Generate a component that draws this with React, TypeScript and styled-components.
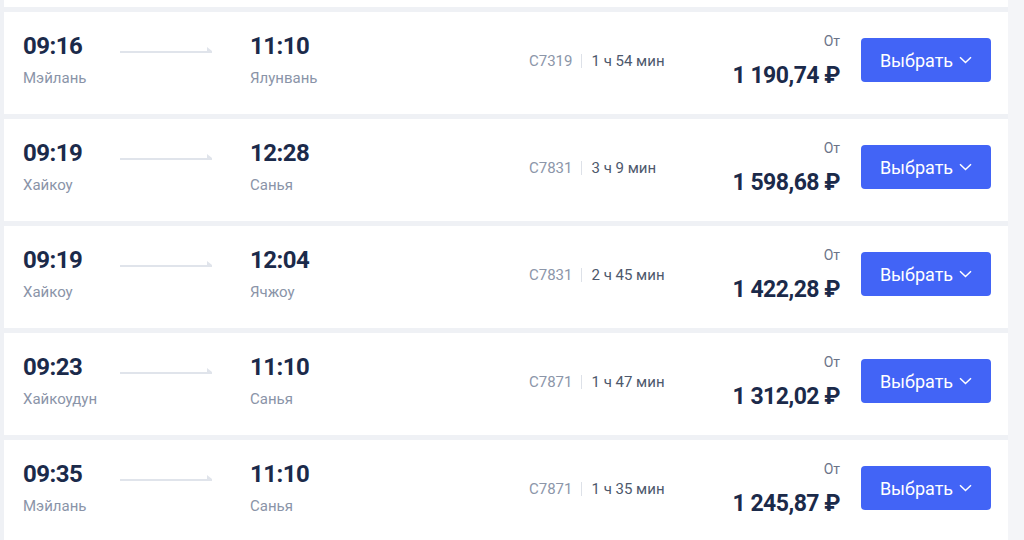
import React from "react";
import styled, { createGlobalStyle } from "styled-components";

interface Trip {
  depTime: string;
  depCity: string;
  arrTime: string;
  arrCity: string;
  code: string;
  duration: string;
  price: string;
}

const trips: Trip[] = [
  { depTime: "09:16", depCity: "Мэйлань", arrTime: "11:10", arrCity: "Ялунвань", code: "C7319", duration: "1 ч 54 мин", price: "1 190,74 ₽" },
  { depTime: "09:19", depCity: "Хайкоу", arrTime: "12:28", arrCity: "Санья", code: "C7831", duration: "3 ч 9 мин", price: "1 598,68 ₽" },
  { depTime: "09:19", depCity: "Хайкоу", arrTime: "12:04", arrCity: "Ячжоу", code: "C7831", duration: "2 ч 45 мин", price: "1 422,28 ₽" },
  { depTime: "09:23", depCity: "Хайкоудун", arrTime: "11:10", arrCity: "Санья", code: "C7871", duration: "1 ч 47 мин", price: "1 312,02 ₽" },
  { depTime: "09:35", depCity: "Мэйлань", arrTime: "11:10", arrCity: "Санья", code: "C7871", duration: "1 ч 35 мин", price: "1 245,87 ₽" },
];

const GlobalStyle = createGlobalStyle`
  html, body {
    margin: 0;
    padding: 0;
    background: #eff1f5;
    font-family: Roboto, "Noto Sans", "Liberation Sans", sans-serif;
    overflow: hidden;
  }
`;

const Page = styled.div`
  display: flex;
  width: 1024px;
  height: 540px;
  overflow: hidden;
`;

const List = styled.div`
  display: flex;
  flex-direction: column;
  gap: 5px;
  width: 1004px;
  padding-left: 4px;
`;

const Aside = styled.div`
  flex: 1;
  background: #f4f5f8;
`;

// the card above the fold: only its bottom edge shows
const CardEdge = styled.div`
  flex: none;
  height: 7px;
  background: #ffffff;
`;

const Card = styled.div`
  flex: none;
  height: 102px;
  box-sizing: border-box;
  padding: 0 17px 6px 19px;
  background: #ffffff;
  display: flex;
  align-items: center;
`;

const Point = styled.div<{ $w: number }>`
  width: ${(p) => p.$w}px;
  flex: none;
  display: flex;
  flex-direction: column;
  gap: 8px;
`;

const Time = styled.div`
  font-size: 24px;
  line-height: 28px;
  font-weight: 700;
  letter-spacing: -0.5px;
  color: #1b2a4a;
`;

const City = styled.div`
  font-size: 15px;
  line-height: 20px;
  color: #8a94a8;
`;

const ArrowBox = styled.div`
  width: 92px;
  flex: none;
  margin: 0 38px 20px 0;
  display: flex;
`;

const Info = styled.div`
  display: flex;
  align-items: center;
  font-size: 15px;
  line-height: 20px;
  margin-top: 2px;
`;

const Code = styled.span`
  color: #8c96a9;
`;

const Sep = styled.span`
  width: 1px;
  height: 14px;
  background: #dde1e8;
  margin: 0 9px;
`;

const Duration = styled.span`
  color: #4d586c;
`;

const PriceBox = styled.div`
  margin-left: auto;
  margin-right: 21px;
  margin-top: 1px;
  display: flex;
  flex-direction: column;
  align-items: flex-end;
  gap: 12px;
`;

const From = styled.div`
  font-size: 14px;
  line-height: 18px;
  color: #6b7488;
`;

const Price = styled.div`
  font-size: 23px;
  line-height: 28px;
  font-weight: 700;
  letter-spacing: -0.5px;
  color: #1b2a4a;
`;

const Button = styled.button`
  width: 130px;
  height: 44px;
  flex: none;
  border: none;
  border-radius: 4px;
  background: #4264f6;
  color: #ffffff;
  font-family: inherit;
  font-size: 18px;
  display: flex;
  align-items: center;
  justify-content: center;
  gap: 6px;
  cursor: pointer;
`;

const Arrow = () => (
  <svg width="92" height="8" viewBox="0 0 92 8">
    <rect x="0" y="5" width="92" height="2" fill="#e0e4eb" />
    <polygon points="87,1 92,5 87,5" fill="#e0e4eb" />
  </svg>
);

const Chevron = () => (
  <svg width="13" height="8" viewBox="0 0 13 8">
    <path d="M1 1.2 L6.5 6.5 L12 1.2" fill="none" stroke="#fff" strokeWidth="1.5" />
  </svg>
);

const App = () => {
  return (
    <Page>
      <GlobalStyle />
      <List>
        <CardEdge />
        {trips.map((t, i) => (
          <Card key={i}>
            <Point $w={97}>
              <Time>{t.depTime}</Time>
              <City>{t.depCity}</City>
            </Point>
            <ArrowBox>
              <Arrow />
            </ArrowBox>
            <Point $w={279}>
              <Time>{t.arrTime}</Time>
              <City>{t.arrCity}</City>
            </Point>
            <Info>
              <Code>{t.code}</Code>
              <Sep />
              <Duration>{t.duration}</Duration>
            </Info>
            <PriceBox>
              <From>От</From>
              <Price>{t.price}</Price>
            </PriceBox>
            <Button>
              Выбрать
              <Chevron />
            </Button>
          </Card>
        ))}
      </List>
      <Aside />
    </Page>
  );
};

export default App;
